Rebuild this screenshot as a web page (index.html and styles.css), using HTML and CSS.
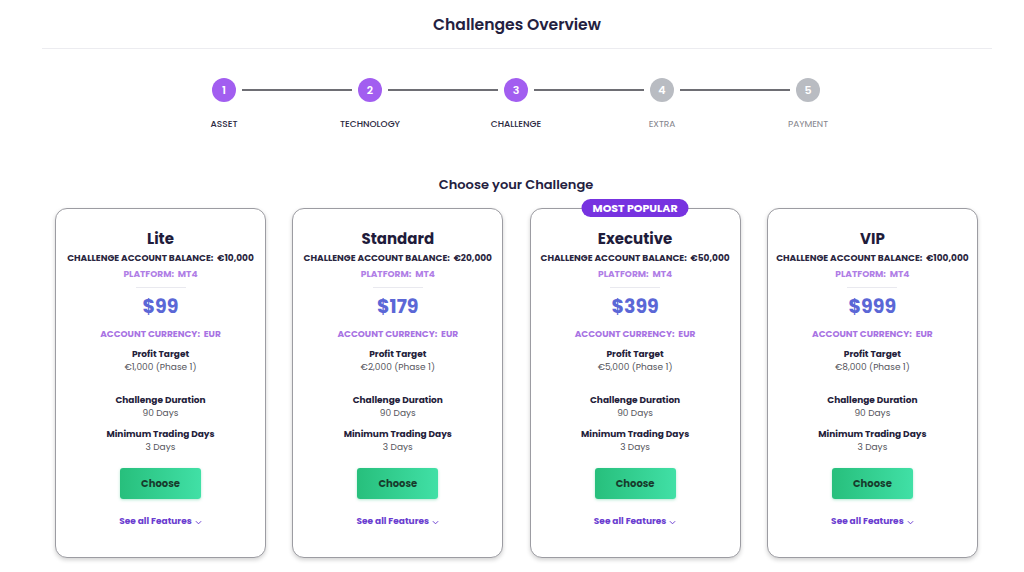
FILE: index.html
```html
<!DOCTYPE html>
<html lang="en">
<head>
<meta charset="utf-8">
<title>Challenges Overview</title>
<link rel="stylesheet" href="styles.css">
</head>
<body>
<div class="page">
  <header class="header">
    <h1 class="page-title">Challenges Overview</h1>
  </header>

  <ol class="stepper">
    <li class="step done"><span class="dot">1</span><span class="label">ASSET</span></li>
    <li class="step done"><span class="dot">2</span><span class="label">TECHNOLOGY</span></li>
    <li class="step done"><span class="dot">3</span><span class="label">CHALLENGE</span></li>
    <li class="step"><span class="dot">4</span><span class="label">EXTRA</span></li>
    <li class="step last"><span class="dot">5</span><span class="label">PAYMENT</span></li>
  </ol>

  <h2 class="section-title">Choose your Challenge</h2>

  <div class="cards">
    <div class="card">
      <h3 class="card-title">Lite</h3>
      <p class="balance">CHALLENGE ACCOUNT BALANCE:&nbsp; €10,000</p>
      <p class="platform">PLATFORM:&nbsp; MT4</p>
      <hr class="sep">
      <p class="price">$99</p>
      <p class="currency">ACCOUNT CURRENCY:&nbsp; EUR</p>
      <p class="k k1">Profit Target</p>
      <p class="v">€1,000 (Phase 1)</p>
      <p class="k k2">Challenge Duration</p>
      <p class="v">90 Days</p>
      <p class="k k3">Minimum Trading Days</p>
      <p class="v">3 Days</p>
      <button class="choose">Choose</button>
      <a class="features">See all Features <svg class="chev" viewBox="0 0 8 5" width="7" height="5"><path d="M1 1l3 3 3-3" fill="none" stroke="currentColor" stroke-width="1.1"/></svg></a>
    </div>
    <div class="card">
      <h3 class="card-title">Standard</h3>
      <p class="balance">CHALLENGE ACCOUNT BALANCE:&nbsp; €20,000</p>
      <p class="platform">PLATFORM:&nbsp; MT4</p>
      <hr class="sep">
      <p class="price">$179</p>
      <p class="currency">ACCOUNT CURRENCY:&nbsp; EUR</p>
      <p class="k k1">Profit Target</p>
      <p class="v">€2,000 (Phase 1)</p>
      <p class="k k2">Challenge Duration</p>
      <p class="v">90 Days</p>
      <p class="k k3">Minimum Trading Days</p>
      <p class="v">3 Days</p>
      <button class="choose">Choose</button>
      <a class="features">See all Features <svg class="chev" viewBox="0 0 8 5" width="7" height="5"><path d="M1 1l3 3 3-3" fill="none" stroke="currentColor" stroke-width="1.1"/></svg></a>
    </div>
    <div class="card popular">
      <span class="badge">MOST POPULAR</span>
      <h3 class="card-title">Executive</h3>
      <p class="balance">CHALLENGE ACCOUNT BALANCE:&nbsp; €50,000</p>
      <p class="platform">PLATFORM:&nbsp; MT4</p>
      <hr class="sep">
      <p class="price">$399</p>
      <p class="currency">ACCOUNT CURRENCY:&nbsp; EUR</p>
      <p class="k k1">Profit Target</p>
      <p class="v">€5,000 (Phase 1)</p>
      <p class="k k2">Challenge Duration</p>
      <p class="v">90 Days</p>
      <p class="k k3">Minimum Trading Days</p>
      <p class="v">3 Days</p>
      <button class="choose">Choose</button>
      <a class="features">See all Features <svg class="chev" viewBox="0 0 8 5" width="7" height="5"><path d="M1 1l3 3 3-3" fill="none" stroke="currentColor" stroke-width="1.1"/></svg></a>
    </div>
    <div class="card">
      <h3 class="card-title">VIP</h3>
      <p class="balance">CHALLENGE ACCOUNT BALANCE:&nbsp; €100,000</p>
      <p class="platform">PLATFORM:&nbsp; MT4</p>
      <hr class="sep">
      <p class="price">$999</p>
      <p class="currency">ACCOUNT CURRENCY:&nbsp; EUR</p>
      <p class="k k1">Profit Target</p>
      <p class="v">€8,000 (Phase 1)</p>
      <p class="k k2">Challenge Duration</p>
      <p class="v">90 Days</p>
      <p class="k k3">Minimum Trading Days</p>
      <p class="v">3 Days</p>
      <button class="choose">Choose</button>
      <a class="features">See all Features <svg class="chev" viewBox="0 0 8 5" width="7" height="5"><path d="M1 1l3 3 3-3" fill="none" stroke="currentColor" stroke-width="1.1"/></svg></a>
    </div>
  </div>
</div>
</body>
</html>
```

FILE: styles.css
```css
* { box-sizing: border-box; }
html, body { margin: 0; padding: 0; background: #fff; }
body {
  font-family: "Poppins", "Inter", "Noto Sans", sans-serif;
  color: #1f1c3b;
  width: 1024px;
  height: 572px;
  overflow: hidden;
}
.page { margin-left: 8px; width: 1016px; }

.header {
  margin: 0 32px 0 34px;
  height: 49px;
  border-bottom: 1px solid #ececf0;
  display: flex;
  justify-content: center;
  align-items: flex-start;
}
.page-title {
  margin: 15px 0 0;
  font-size: 15.6px;
  line-height: 20px;
  font-weight: 600;
  color: #24213f;
}

.stepper {
  list-style: none;
  margin: 29px auto 0;
  padding: 0;
  width: 730px;
  display: flex;
}
.step {
  width: 146px;
  display: flex;
  flex-direction: column;
  align-items: center;
  position: relative;
}
.step::after {
  content: "";
  position: absolute;
  top: 11px;
  left: 91px;
  width: 110px;
  height: 1.5px;
  background: #6e6e74;
}
.step.last::after { display: none; }
.dot {
  width: 24px;
  height: 24px;
  border-radius: 50%;
  background: #b9bcc2;
  color: #fff;
  font-size: 11px;
  font-weight: 600;
  display: flex;
  align-items: center;
  justify-content: center;
}
.step.done .dot { background: #a25ef0; }
.label {
  margin-top: 16px;
  font-size: 9px;
  line-height: 12px;
  color: #85858d;
  font-weight: 400;
}
.step.done .label { color: #2a2740; font-weight: 500; }

.section-title {
  margin: 46px 0 0;
  text-align: center;
  font-size: 13px;
  line-height: 18px;
  font-weight: 600;
  color: #24213f;
}

.cards {
  margin: 14px 0 0 47px;
  width: 924px;
  display: grid;
  grid-template-columns: repeat(4, 211px);
  column-gap: 26.3px;
}
.card {
  position: relative;
  height: 350px;
  border: 1px solid #9c9ca2;
  border-radius: 12px;
  box-shadow: 0 2px 4px rgba(0,0,0,0.18);
  background: #fff;
  display: flex;
  flex-direction: column;
  align-items: center;
  padding-top: 21px;
  text-align: center;
}
.card p { margin: 0; }
.badge {
  position: absolute;
  top: -10px;
  left: 50%;
  transform: translateX(-50%);
  height: 18px;
  padding: 0 11px;
  border-radius: 9px;
  background: #7733e0;
  color: #fff;
  font-size: 11px;
  line-height: 18px;
  font-weight: 700;
  white-space: nowrap;
}
.card-title {
  margin: 0;
  font-size: 15px;
  line-height: 18px;
  font-weight: 700;
  color: #1f1c3b;
}
.balance {
  margin-top: 4px !important;
  font-size: 9px;
  line-height: 12px;
  font-weight: 700;
  color: #2a2640;
  white-space: nowrap;
}
.platform {
  margin-top: 4px !important;
  font-size: 9px;
  line-height: 12px;
  font-weight: 700;
  color: #b07ee6;
}
.sep {
  margin: 7px 0 0;
  width: 50px;
  height: 1px;
  border: 0;
  background: #e9e9ef;
}
.price {
  margin-top: 7px !important;
  font-size: 19px;
  line-height: 24px;
  font-weight: 700;
  color: #5b67d6;
}
.currency {
  margin-top: 9px !important;
  font-size: 9px;
  line-height: 12px;
  font-weight: 700;
  color: #a873e3;
}
.k {
  font-size: 9px;
  line-height: 12px;
  font-weight: 700;
  color: #24213a;
}
.k1 { margin-top: 8px !important; }
.k2 { margin-top: 21px !important; }
.k3 { margin-top: 9px !important; }
.v {
  margin-top: 1px !important;
  font-size: 9px;
  line-height: 12px;
  color: #55555c;
}
.choose {
  margin-top: 15px;
  width: 81px;
  height: 31px;
  border: 0;
  border-radius: 3px;
  background: linear-gradient(90deg, #27bf7c, #41e0a6);
  box-shadow: 0 1px 3px rgba(40,190,125,0.35);
  font-family: inherit;
  font-size: 10px;
  font-weight: 700;
  color: #173b2c;
  cursor: pointer;
}
.features {
  margin-top: 16px;
  font-size: 9px;
  line-height: 12px;
  font-weight: 700;
  color: #6a3dd0;
  display: flex;
  align-items: center;
  gap: 3px;
}
.chev { margin-top: 2px; }
```
